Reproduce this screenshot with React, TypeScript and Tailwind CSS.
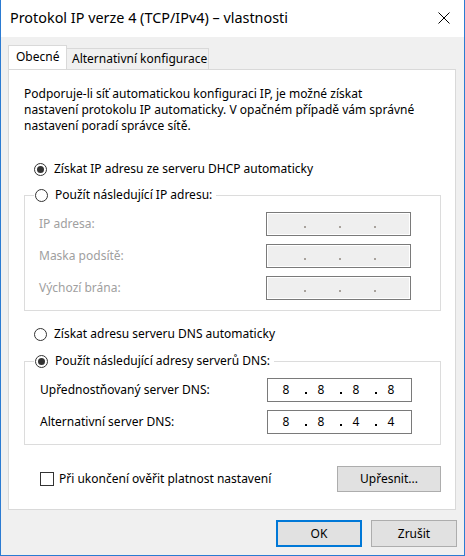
import React from "react";

const font = { fontFamily: '"Noto Sans", "Segoe UI", sans-serif' };

function Radio({ checked }: { checked?: boolean }) {
  return (
    <span className="flex h-[13px] w-[13px] shrink-0 items-center justify-center rounded-full border border-[#333333] bg-white">
      {checked && <span className="block h-[7px] w-[7px] rounded-full bg-[#333333]" />}
    </span>
  );
}

function IpField({ values, disabled }: { values?: string[]; disabled?: boolean }) {
  const v = values ?? ["", "", "", ""];
  const dot = disabled ? "bg-[#a8a29c]" : "bg-black";
  return (
    <div
      className={`flex h-[24px] w-[145px] shrink-0 items-center border border-[#7a7a7a] pl-[5px] ${
        disabled ? "bg-[#efefef] shadow-[inset_0_0_0_1px_#ffffff]" : "bg-white"
      }`}
    >
      {v.map((o, i) => (
        <React.Fragment key={i}>
          <span className="w-[26px] text-center text-[12px] leading-none text-black">{o}</span>
          {i < 3 && (
            <>
              <span className={`ml-[6px] mt-[5px] block h-[2px] w-[2px] ${dot}`} />
              <span className="w-[1px]" />
            </>
          )}
        </React.Fragment>
      ))}
    </div>
  );
}

function Row({ label, disabled, values }: { label: string; disabled?: boolean; values?: string[] }) {
  return (
    <div className="flex h-[24px] items-center">
      <span className={`w-[227px] ${disabled ? "text-[#a0a0a0]" : "text-black"}`}>{label}</span>
      <IpField disabled={disabled} values={values} />
    </div>
  );
}

export default function App() {
  return (
    <div
      className="flex h-[556px] w-[465px] flex-col border-x border-b border-[#2b7bd2] bg-[#f0f0f0] text-[12px] leading-[16px] text-black"
      style={font}
    >
      {/* title bar */}
      <div className="flex h-[37px] shrink-0 items-center justify-between bg-white pl-[9px] pr-[14px]">
        <span className="text-[14.4px] leading-none text-black">Protokol IP verze 4 (TCP/IPv4) – vlastnosti</span>
        <svg width="12" height="12" viewBox="0 0 12 12" className="mb-[1px]">
          <path d="M0.5 0.5 L11.5 11.5 M11.5 0.5 L0.5 11.5" stroke="#000" strokeWidth="1" fill="none" />
        </svg>
      </div>

      {/* tabs */}
      <div className="ml-[7px] mt-[9px] flex h-[23px] items-end">
        <div className="relative z-10 flex h-[24px] w-[59px] items-start border-x border-t border-[#d9d9d9] bg-white pl-[7px] pt-[3px]">
          Obecné
        </div>
        <div className="-ml-[1px] flex h-[21px] w-[143px] items-start whitespace-nowrap border-x border-t border-[#d9d9d9] bg-[#f0f0f0] pl-[5px] pt-[2px]">
          Alternativní konfigurace
        </div>
      </div>

      {/* panel */}
      <div className="ml-[7px] flex h-[441px] w-[448px] flex-col border border-[#d9d9d9] bg-white pl-[15px] pr-[14px]">
        <p className="mt-[16px]">
          Podporuje-li síť automatickou konfiguraci IP, je možné získat
          <br />
          nastavení protokolu IP automaticky. V opačném případě vám správné
          <br />
          nastavení poradí správce sítě.
        </p>

        <div className="ml-[10px] mt-[27px] flex h-[16px] items-center gap-[7px]">
          <Radio checked />
          <span>Získat IP adresu ze serveru DHCP automaticky</span>
        </div>

        <fieldset className="mt-[10px] border border-[#dcdcdc] px-0 pb-[10px] pl-[14px] pt-[9px]">
          <legend className="-ml-[5px] flex h-[16px] items-center gap-[7px] pl-[1px] pr-[4px]">
            <Radio />
            <span>Použít následující IP adresu:</span>
          </legend>
          <div className="flex flex-col gap-[8px]">
            <Row label="IP adresa:" disabled />
            <Row label="Maska podsítě:" disabled />
            <Row label="Výchozí brána:" disabled />
          </div>
        </fieldset>

        <div className="ml-[10px] mt-[15px] flex h-[16px] items-center gap-[7px]">
          <Radio />
          <span>Získat adresu serveru DNS automaticky</span>
        </div>

        <fieldset className="mt-[11px] border border-[#dcdcdc] px-0 pb-[10px] pl-[15px] pt-[9px]">
          <legend className="-ml-[6px] flex h-[16px] items-center gap-[7px] pl-[1px] pr-[4px]">
            <Radio checked />
            <span>Použít následující adresy serverů DNS:</span>
          </legend>
          <div className="flex flex-col gap-[8px]">
            <Row label="Upřednostňovaný server DNS:" values={["8", "8", "8", "8"]} />
            <Row label="Alternativní server DNS:" values={["8", "8", "4", "4"]} />
          </div>
        </fieldset>

        <div className="mt-[21px] flex items-center justify-between">
          <div className="ml-[16px] flex items-center gap-[5px]">
            <span className="block h-[14px] w-[14px] border border-[#333333] bg-white" />
            <span>Při ukončení ověřit platnost nastavení</span>
          </div>
          <button className="flex h-[26px] w-[104px] items-center justify-center border border-[#adadad] bg-[#e1e1e1]">
            Upřesnit...
          </button>
        </div>
      </div>

      {/* bottom buttons */}
      <div className="mr-[7px] mt-[10px] flex justify-end gap-[9px]">
        <button className="flex h-[27px] w-[86px] items-center justify-center border-2 border-[#0078d7] bg-[#e1e1e1]">
          OK
        </button>
        <button className="flex h-[27px] w-[86px] items-center justify-center border border-[#adadad] bg-[#e1e1e1]">
          Zrušit
        </button>
      </div>
    </div>
  );
}
